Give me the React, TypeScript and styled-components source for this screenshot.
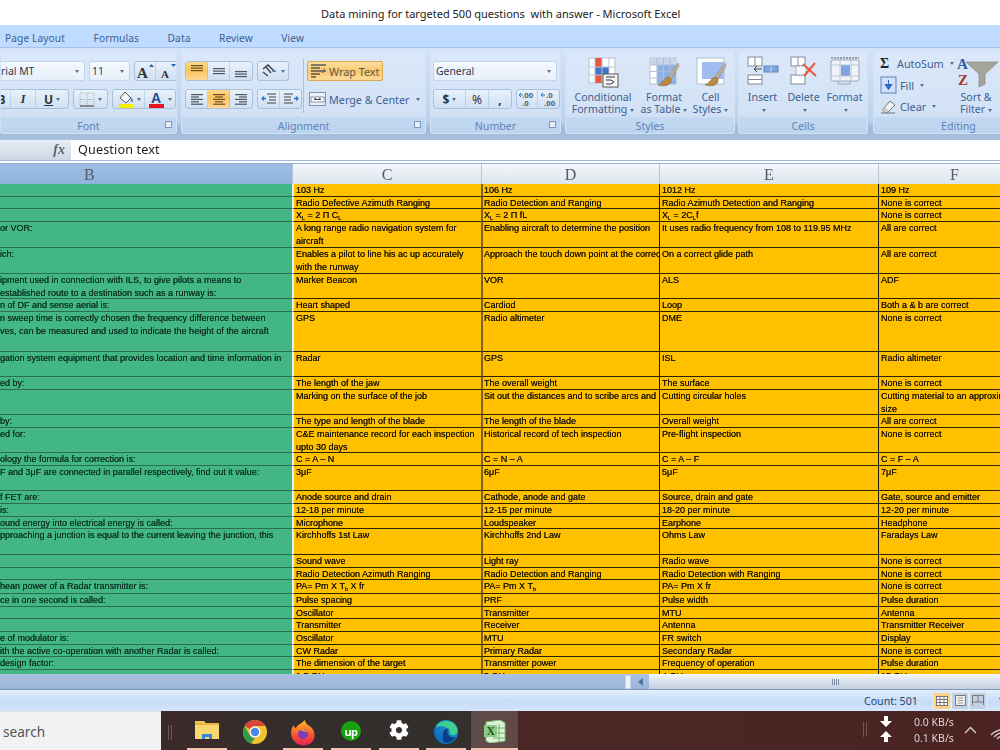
import React from "react";
import styled, { createGlobalStyle } from "styled-components";
import { FaCog } from "react-icons/fa";

const Global = createGlobalStyle`
  html, body { margin: 0; padding: 0; background: #fff; }
  * { box-sizing: border-box; }
`;

const UI = `"Noto Sans", "Open Sans", sans-serif`;
const BLUE = "#3f5f8e";

const Root = styled.div`
  width: 1000px; height: 750px; overflow: hidden; display: flex; flex-direction: column;
  font-family: ${UI}; filter: blur(0.35px);
`;
const TitleBar = styled.div`
  height: 25px; background: #fff; color: #222; font-size: 11px; display: flex; align-items: center;
  padding: 1px 0 0 321px; white-space: pre;
`;
const Tabs = styled.div`
  height: 23px; background: #bfdbff; border-bottom: 1px solid #a3c3ea; display: flex; align-items: center;
  gap: 28.5px; padding: 3px 0 0 5px; font-size: 10.2px; color: ${BLUE}; letter-spacing: .1px;
`;
const Ribbon = styled.div`
  height: 92px; padding-top: 4px; display: flex; flex-shrink: 0;
  background: linear-gradient(#d3e3f8, #bcd3ee 78%, #9db7d6 88%, #a9c2df);
  overflow: hidden;
`;
const Group = styled.section<{ $w: number; $mr?: number }>`
  width: ${(p) => p.$w}px; margin-right: ${(p) => p.$mr ?? 4}px; height: 82px; flex-shrink: 0; display: flex; flex-direction: column;
  border: 1px solid #d2e1f4; border-top-color: #dce8f8; border-radius: 3px; overflow: hidden;
  background: linear-gradient(#dbe8f9, #d3e2f6 70%, #cbdcf2);
`;
const Body = styled.div`flex: 1; display: flex; min-height: 0;`;
const GroupLabel = styled.div<{ $pl?: number }>`
  height: 16px; flex-shrink: 0; background: linear-gradient(#c3d9f2, #bdd4ef); color: #5d82b3; font-size: 10.6px; padding-top: 1px;
  display: flex; align-items: center; position: relative;
  ${(p) => (p.$pl ? `padding-left:${p.$pl}px;` : "justify-content:center;")}
`;
const Launcher = styled.span`
  position: absolute; right: 4px; top: 4px; width: 7px; height: 7px; border: 1px solid #7d96b8; background: #e8f0fa;
`;
const Caret = styled.i`
  display: inline-block; width: 0; height: 0; margin-left: 3px; vertical-align: middle;
  border-left: 2.5px solid transparent; border-right: 2.5px solid transparent; border-top: 3px solid #5b6e88;
`;
const Rows = styled.div<{ $pl?: number; $w?: number }>`
  display: flex; flex-direction: column; gap: 8px; padding: 8px 0 0 ${(p) => p.$pl ?? 0}px;
  ${(p) => (p.$w ? `width:${p.$w}px;flex-shrink:0;` : "")}
`;
const ToolRow = styled.div`display: flex; height: 20px; gap: 4px; align-items: stretch;`;
const Select = styled.div<{ $w: number; $ml?: number }>`
  width: ${(p) => p.$w}px; height: 20px; margin-left: ${(p) => p.$ml ?? 0}px; display: flex; align-items: center; justify-content: space-between;
  padding: 0 5px 0 2px; font-size: 10.4px; color: #2c3a4d; border: 1px solid #c3d5ec; border-radius: 2px;
  background: linear-gradient(#f4f8fe, #e6effa);
`;
const BtnGroup = styled.div<{ $ml?: number }>`
  display: flex; height: 20px; border: 1px solid #a9c0dc; border-radius: 3px; overflow: hidden; flex-shrink: 0;
  margin-left: ${(p) => p.$ml ?? 0}px;
  background: linear-gradient(#e9f1fb, #cfdff2);
`;
const Tool = styled.div<{ $w: number; $on?: boolean }>`
  width: ${(p) => p.$w}px; display: flex; align-items: center; justify-content: center; font-size: 12px; color: #2b3543;
  border-right: 1px solid rgba(160,185,215,.5);
  &:last-child { border-right: 0; }
  ${(p) => (p.$on ? "background: linear-gradient(#fdd98a, #fcc45e 45%, #fdd894);" : "")}
`;
const ItalicI = styled.i`font-family: "Liberation Serif", serif; font-weight: bold;`;
const Sep = styled.div`width: 1px; height: 54px; margin: 6px 3px 0 0; background: #a9c0dc;`;
const WrapBtn = styled.div`
  width: 76px; height: 20px; display: flex; align-items: center; gap: 2px; padding-left: 2px; font-size: 10.8px; color: #5a5a48;
  border: 1px solid #d9a94f; border-radius: 2px; background: linear-gradient(#fde0a2, #fcc86c 50%, #fdd997);
`;
const MergeBtn = styled.div`
  height: 20px; display: flex; align-items: center; gap: 3px; padding-left: 2px; font-size: 10.8px; color: ${BLUE}; white-space: nowrap;
`;
const BigRow = styled.div<{ $pl: number }>`display: flex; padding: 3px 0 0 ${(p) => p.$pl}px;`;
const Big = styled.div<{ $w: number }>`
  width: ${(p) => p.$w}px; flex-shrink: 0; display: flex; flex-direction: column; align-items: center;
  font-size: 10.6px; line-height: 12px; color: ${BLUE}; text-align: center; white-space: nowrap;
`;
const BigIcon = styled.div`height: 35px; display: flex; align-items: flex-start;`;
const EditCol = styled.div`display: flex; flex-direction: column; gap: 2.5px; padding: 1px 0 0 6px; width: 84px; flex-shrink: 0;`;
const EditItem = styled.div`
  height: 19px; display: flex; align-items: center; gap: 3px; font-size: 10.8px; color: ${BLUE}; white-space: nowrap;
`;
const Sigma = styled.b`font-family: "Liberation Serif", serif; font-size: 14px; color: #222; width: 14px;`;
const FormulaBar = styled.div`
  height: 21px; margin-bottom: 2px; display: flex; align-items: stretch; background: #fff; border-bottom: 1px solid #9db8d6; flex-shrink: 0;
`;
const NameArea = styled.div`
  width: 71px; background: linear-gradient(#e9eef5, #ccd6e4); display: flex; align-items: center; justify-content: flex-end; padding-right: 6px;
  font-family: "Liberation Serif", serif; font-style: italic; font-weight: bold; font-size: 14px; color: #5d6470;
`;
const FormulaText = styled.div`padding: 0 0 1px 7px; font-size: 12.6px; color: #222; display: flex; align-items: center; letter-spacing: .15px;`;
const COLS = "292px 189px 178px 219px 300px";
const HeaderRow = styled.div`
  height: 21px; flex-shrink: 0; display: grid; grid-template-columns: ${COLS}; border-top: 1px solid #8fb0d2;
`;
const ColHead = styled.div<{ $sel?: boolean; $pl?: number }>`
  display: flex; align-items: center; justify-content: center; font-family: "Liberation Serif", serif; font-size: 16px; color: #4f5b6b; padding-top: 2px;
  border-left: 1px solid ${(p) => (p.$sel ? "transparent" : "#b8c6d8")};
  background: ${(p) => (p.$sel ? "linear-gradient(#9dbde3,#90b3dc)" : "linear-gradient(#f5f7fa,#dbe3ee)")};
  ${(p) => p.$pl && `justify-content: flex-start; padding-left: ${p.$pl}px;`}
`;
const Sheet = styled.div`height: 490px; flex-shrink: 0; overflow: hidden;`;
const Row = styled.div<{ $h: number }>`
  height: ${(p) => p.$h}px; display: grid; grid-template-columns: ${COLS};
`;
const Cell = styled.div<{ $col: number }>`
  overflow: hidden; white-space: pre; font-family: "Liberation Sans", Arial, sans-serif; font-size: 9px; line-height: 12.7px;
  text-shadow: 0 0 .5px currentColor;
  padding-left: ${(p) => (p.$col === 0 ? 0 : p.$col === 2 ? 1 : 2)}px;
  ${(p) =>
    p.$col === 0
      ? "background:#42b784;color:#0c3325;border-bottom:1px solid #2a6d53;"
      : `background:#ffc000;color:#1e1700;border-bottom:1px solid #2a2200;border-left:${
          p.$col === 1 ? "2px solid #e8eef4" : p.$col === 2 ? "2px solid #7b6318" : "1px solid #1e1900"
        };`}
`;
const Sub = styled.sub`font-size: 5.5px; line-height: 0; vertical-align: -1.5px;`;
const ScrollBar = styled.div`
  height: 16px; flex-shrink: 0; display: flex; align-items: center; background: linear-gradient(#a9c1e2,#9bb5da); border-bottom: 1px solid #7f98bd;
`;
const ScrollFill = styled.div`width: 625px;`;
const Splitter = styled.div`width: 6px; height: 14px; background: #eef3fa; border: 1px solid #c3d3ea;`;
const ScrollArrow = styled.div`
  width: 18px; height: 15px; display: flex; align-items: center; justify-content: center;
  &::before { content: ""; border-top: 4px solid transparent; border-bottom: 4px solid transparent; border-right: 5px solid #54739c; }
`;
const Thumb = styled.div`
  flex: 1; height: 15px; background: linear-gradient(#f5f8fc,#d4deeb 60%,#c3cfdf); display: flex; align-items: center; padding-left: 183px;
`;
const Grip = styled.div`width: 7px; height: 6px; background: repeating-linear-gradient(90deg,#7d8da3 0 1px,transparent 1px 2px);`;
const Status = styled.div`
  height: 21px; flex-shrink: 0; display: flex; align-items: center;
  background: linear-gradient(#e3eefc,#c6dcf8 55%,#d4e5fb); font-size: 10.6px; color: #24456f; padding-left: 864px; white-space: nowrap;
`;
const Count = styled.div`width: 69px; flex-shrink: 0;`;
const Views = styled.div`
  width: 54px; height: 19px; flex-shrink: 0; display: flex; align-items: center; gap: 2px; padding: 0 1px; background: #dfeafa; border-radius: 3px;
`;
const ViewBtn = styled.div<{ $on?: boolean }>`
  width: 17px; height: 16px; display: flex; align-items: center; justify-content: center;
  background: ${(p) => (p.$on ? "#fcd383" : "#c3d1e6")}; border-radius: 1px;
`;
const Zoom = styled.div`margin-left: 11px; color: #24456f;`;
const Taskbar = styled.div`
  height: 39px; flex-shrink: 0; display: flex; background: linear-gradient(90deg,#3d2a2a 161px,#332d2b 300px,#33302e 470px,#4a2725 520px,#4b2422);
  overflow: hidden;
`;
const Search = styled.div`
  width: 161px; flex-shrink: 0; background: #f2f2f2; color: #555; font-size: 13.6px; padding-left: 3px; display: flex; align-items: center; border-top: 1px solid #ddd;
`;
const TaskGrip = styled.div`
  width: 4px; height: 15px; margin: 14px 11px 0 7px; flex-shrink: 0; border-left: 1px solid #6c5a58; border-right: 1px solid #6c5a58;
`;
const Tile = styled.div<{ $on?: boolean; $w?: number; $ml?: number }>`
  width: ${(p) => p.$w ?? 48}px; margin-left: ${(p) => p.$ml ?? 0}px; flex-shrink: 0; display: flex; flex-direction: column; align-items: center;
  background: ${(p) => (p.$on ? "#5f4a48" : "transparent")};
`;
const TileIcon = styled.div`height: 37px; padding-top: 9px;`;
const Indicator = styled.div<{ $w: number }>`width: ${(p) => p.$w}px; height: 2px; background: #f6bfb0;`;
const Tray = styled.div`display: flex; margin-left: 345px; flex-shrink: 0; align-items: flex-start;`;
const TrayGrip = styled.div`width: 4px; height: 15px; margin: 11px 13px 0 0; border-left: 1px solid #6c5653; border-right: 1px solid #6c5653;`;
const Arrows = styled.div`display: flex; flex-direction: column; gap: 4px; padding-top: 5px; width: 34px;`;
const Speeds = styled.div`
  color: #dcd6d4; font-size: 10.5px; line-height: 15.5px; padding-top: 4px; width: 50px; white-space: nowrap;
`;
const TrayIcon = styled.div<{ $pt: number; $w: number }>`display: flex; padding-top: ${(p) => p.$pt}px; width: ${(p) => p.$w}px;`;
const UpBadge = styled.div`
  width: 20px; height: 20px; border-radius: 50%; background: #17a20d; color: #fff; font-size: 11px; font-weight: 700; letter-spacing: -.5px;
  display: flex; align-items: center; justify-content: center; margin-top: 1px;
`;

const Lines = ({ rows, c = "#4d5563" }: { rows: [number, number, number][]; c?: string }) => (
  <svg width="14" height="14" viewBox="0 0 14 14">
    {rows.map(([y, x, w], i) => <rect key={i} x={x} y={y} width={w} height="1.2" fill={c} />)}
  </svg>
);
const v = (y: number): [number, number, number][] => [[y, 1, 12], [y + 2.5, 1, 12], [y + 5, 1, 12]];
const h4 = (f: (w: number) => number): [number, number, number][] =>
  [12, 8, 12, 8, 12].map((w, i) => [2 + i * 2.4, f(w), w]);

const Cond = () => (
  <svg width="32" height="32" viewBox="0 0 32 32">
    <rect x="2" y="2" width="26" height="25" fill="#fff" stroke="#b7c3d2" />
    <rect x="8" y="2" width="7" height="9" fill="#e8563f" /><rect x="8" y="19" width="7" height="8" fill="#e8563f" />
    <rect x="8" y="11" width="14" height="8" fill="#3f76cc" />
    <path d="M2 11h26M2 19h26M8 2v25M15 2v25M22 2v25" stroke="#b7c3d2" fill="none" />
    <rect x="16" y="18" width="15" height="13" fill="#f7f7f7" stroke="#555" />
    <path d="M19 21h9M19 24h5l3 2-3 2h-5" stroke="#333" fill="none" />
  </svg>
);
const Brush = () => (
  <g><path d="M30 7 L20 21 L23 23 L31 10Z" fill="#b9b09a" stroke="#8a7f66" strokeWidth=".5" />
    <path d="M20 21 C15 23 15 27 10 29 C18 31 24 29 23 23Z" fill="#b98a45" stroke="#7f5b25" strokeWidth=".5" /></g>
);
const TableI = () => (
  <svg width="32" height="32" viewBox="0 0 32 32">
    <rect x="2" y="2" width="26" height="26" fill="#fff" stroke="#b7c3d2" />
    <rect x="9" y="9" width="19" height="19" fill="#8eaee6" /><rect x="2" y="2" width="26" height="7" fill="#c7d6ec" />
    <path d="M2 9h26M2 15.5h26M2 22h26M9 2v26M15.5 2v26M22 2v26" stroke="#aebfd6" fill="none" /><Brush />
  </svg>
);
const StyleI = () => (
  <svg width="32" height="32" viewBox="0 0 32 32">
    <rect x="2" y="2" width="27" height="26" fill="#fff" stroke="#aebfd6" />
    <rect x="7" y="6" width="22" height="17" fill="#9ebcf0" /><Brush />
  </svg>
);
const InsertI = () => (
  <svg width="32" height="30" viewBox="0 0 32 30">
    <rect x="1" y="1" width="14" height="9" fill="#fff" stroke="#7f8a99" /><path d="M8 1v9M8 19v9" stroke="#7f8a99" />
    <rect x="1" y="19" width="14" height="9" fill="#fff" stroke="#7f8a99" /><path d="M1 23.5h14" stroke="#7f8a99" />
    <rect x="17" y="10" width="14" height="6" fill="#7ea6e0" stroke="#5d84bd" /><path d="M24 10v6" stroke="#c7d8f0" />
    <path d="M15 13H7M10 10l-3 3 3 3" fill="none" stroke="#444" />
  </svg>
);
const DeleteI = () => (
  <svg width="30" height="30" viewBox="0 0 30 30">
    <rect x="2" y="1" width="14" height="9" fill="#fff" stroke="#7f8a99" /><path d="M9 1v9M9 19v9M2 23.5h14" stroke="#7f8a99" />
    <rect x="2" y="19" width="14" height="9" fill="#fff" stroke="#7f8a99" />
    <rect x="7" y="10" width="10" height="9" fill="#f3f6fb" stroke="#888" strokeDasharray="1.5 1" />
    <path d="M14 8l13 12M26 7L15 20" stroke="#e8573f" strokeWidth="2" />
  </svg>
);
const FormatI = () => (
  <svg width="30" height="30" viewBox="0 0 30 30">
    <path d="M1 2h28" stroke="#555" strokeDasharray="2 1" />
    <rect x="1" y="4" width="28" height="21" rx="2" fill="#f0f4fa" stroke="#9aa7b8" />
    <rect x="11" y="9" width="9" height="11" fill="#7fa3e6" />
    <path d="M10 4v21M21 4v21M1 9h28M1 20h28" stroke="#b8c4d4" />
    <path d="M8 25v3h12v-3" fill="none" stroke="#9aa7b8" />
  </svg>
);
const SortI = () => (
  <svg width="44" height="33" viewBox="0 0 44 33">
    <path d="M12 6h32L31 18v10l-6 3V18Z" fill="#a5a59b" stroke="#7c7c74" strokeWidth=".6" />
    <text x="3" y="13" fontFamily="Liberation Serif" fontWeight="bold" fontSize="15" fill="#2f5da8">A</text>
    <text x="4" y="29" fontFamily="Liberation Serif" fontWeight="bold" fontSize="15" fill="#a3392f">Z</text>
  </svg>
);
const PaintI = () => (
  <svg width="17" height="17" viewBox="0 0 17 17">
    <path d="M8 1l6 6-5 5-6-5Z" fill="#f4f6f9" stroke="#555" /><path d="M14 7l1.5 4" stroke="#6a8abd" strokeWidth="2" />
    <rect x="2" y="13" width="14" height="4" fill="#f5f000" />
  </svg>
);
const FontA = () => (
  <svg width="17" height="17" viewBox="0 0 17 17">
    <text x="3" y="12" fontFamily="Liberation Sans" fontWeight="bold" fontSize="14" fill="#29498f">A</text>
    <rect x="1" y="13" width="15" height="4" fill="#e8121c" />
  </svg>
);
const GrowA = ({ s, up }: { s: number; up: boolean }) => (
  <svg width="20" height="17" viewBox="0 0 20 17">
    <text x={up ? 2 : 4} y="15" fontFamily="Liberation Serif" fontWeight="bold" fontSize={s} fill="#333">A</text>
    <path d={up ? "M14 4l2.5-3 2.5 3Z" : "M14 1h5l-2.5 3Z"} fill="#2a60b0" />
  </svg>
);
const Orient = () => (
  <svg width="17" height="14" viewBox="0 0 17 14">
    <path d="M2 5l5-4 7 7M2 8l5 4" fill="none" stroke="#45494f" strokeWidth="1.6" /><path d="M5 3l5 6" stroke="#45494f" strokeWidth="1.4" />
    <path d="M11 7l4 0" stroke="#5d82b3" strokeWidth="1.4" />
  </svg>
);
const Indent = ({ flip }: { flip?: boolean }) => (
  <svg width="16" height="14" viewBox="0 0 16 14">
    <g transform={flip ? "translate(16 0) scale(-1 1)" : undefined}>
      <path d="M6 2h9M8 5h7M8 8h7M6 11h9" stroke="#444" strokeWidth="1.2" /><path d="M5 6.5H1M3 4.5L1 6.5l2 2" stroke="#2f78d0" fill="none" strokeWidth="1.3" />
    </g>
  </svg>
);
const WrapI = () => (
  <svg width="17" height="16" viewBox="0 0 17 16">
    <path d="M1 2h15M1 5h9M1 8h15M1 11h9M1 14h5" stroke="#5a5a50" strokeWidth="1.3" /><path d="M14 5v4h-3" stroke="#4d6d9c" fill="none" />
  </svg>
);
const MergeI = () => (
  <svg width="17" height="14" viewBox="0 0 17 14">
    <rect x=".5" y=".5" width="16" height="13" fill="#eef2f8" stroke="#8293a9" />
    <rect x="2" y="5" width="13" height="5" fill="#fff" stroke="#8293a9" />
    <path d="M5 7.5h7M5 7.5l2-1.5M12 7.5l-2-1.5" stroke="#444" />
  </svg>
);
const BordersI = () => (
  <svg width="16" height="15" viewBox="0 0 16 15">
    <rect x="1" y="1" width="14" height="13" fill="none" stroke="#a7aeb8" strokeDasharray="1 1" />
    <path d="M8 1v13M1 7.5h14" stroke="#a7aeb8" strokeDasharray="1 1" /><path d="M1 14h14" stroke="#444" />
  </svg>
);
const DecI = ({ more }: { more?: boolean }) => (
  <svg width="18" height="16" viewBox="0 0 18 16">
    <text x={more ? 6 : 4} y="7" fontFamily="Liberation Sans" fontWeight="bold" fontSize="8" fill="#4c5563">{more ? ".0" : ".00"}</text>
    <text x="4" y="15" fontFamily="Liberation Sans" fontWeight="bold" fontSize="8" fill="#4c5563">{more ? ".00" : ".0"}</text>
    <path d="M1 4h4M1 4l2-2M1 4l2 2" stroke="#2f78d0" fill="none" />
  </svg>
);
const FillI = () => (
  <svg width="17" height="18" viewBox="0 0 17 18">
    <rect x="1" y="1" width="15" height="16" fill="#cfe0f7" stroke="#5c82bb" />
    <path d="M8.5 4v7M5 8.5h7l-3.5 5Z" fill="#2f68c4" stroke="#2f68c4" />
  </svg>
);
const ClearI = () => (
  <svg width="17" height="15" viewBox="0 0 17 15">
    <path d="M2 11l8-9 5 4-7 7H4Z" fill="#f1f1f1" stroke="#777" /><path d="M1 14h14" stroke="#777" />
    <path d="M2 11l3-3 4 4-2 1H4Z" fill="#ccc" />
  </svg>
);
const Folder = () => (
  <svg width="24" height="20" viewBox="0 0 24 20">
    <path d="M0 1h9l2 2h13v16H0Z" fill="#f4c64f" /><rect y="4" width="24" height="15" fill="#fbd86e" />
    <rect x="0" y="3" width="24" height="2" fill="#e8b43f" />
    <path d="M7 19v-5h10v5h-3v-2h-4v2Z" fill="#2f8bd8" />
  </svg>
);
const Chrome = () => (
  <svg width="24" height="24" viewBox="0 0 24 24">
    <circle cx="12" cy="12" r="12" fill="#f2c12e" />
    <path d="M12 0a12 12 0 0 1 10.4 6H12a6 6 0 0 0-5.2 3L1.6 6A12 12 0 0 1 12 0Z" fill="#d9433a" />
    <path d="M1.6 6l5.2 9a6 6 0 0 0 5.2 3L8 23.3A12 12 0 0 1 1.600 6Z" fill="#2e9d4a" />
    <circle cx="12" cy="12" r="5.5" fill="#fff" /><circle cx="12" cy="12" r="4.2" fill="#4a86e8" />
  </svg>
);
const Firefox = () => (
  <svg width="24" height="26" viewBox="0 0 24 26">
    <defs><linearGradient id="ff" x1="0" y1="0" x2="0" y2="1"><stop offset="0" stopColor="#fdbb2e" /><stop offset=".6" stopColor="#f5532d" /><stop offset="1" stopColor="#e8215c" /></linearGradient></defs>
    <path d="M14 0c0 4 4 5 7 8 4 5 3 12-1 15-5 4-13 3-17-2C-1 16-1 9 3 5c0 2 1 3 2 3 1-3 5-4 9-8Z" fill="url(#ff)" />
    <circle cx="12" cy="14" r="5" fill="#7a3bb8" /><path d="M8 10c3-2 7-1 8 3-2-2-5-2-8-3Z" fill="#f79a32" />
  </svg>
);
const Edge = () => (
  <svg width="24" height="24" viewBox="0 0 24 24">
    <defs><linearGradient id="eg" x1="0" y1="1" x2="1" y2="0"><stop offset="0" stopColor="#0b5fb8" /><stop offset="1" stopColor="#1da7d8" /></linearGradient></defs>
    <circle cx="12" cy="12" r="12" fill="url(#eg)" />
    <path d="M2 7C5 0 18-2 23 8c1 3 0 6-3 7-3 0-5-1-4-3 0-4-7-7-14-5Z" fill="#3fcf8e" />
    <path d="M9 13c0-3 3-5 6-4-2 1-2 3-1 5 1 3 5 4 8 3-3 5-9 7-12 5-2-2-1-6-1-9Z" fill="#0a3f86" />
  </svg>
);
const ExcelI = () => (
  <svg width="23" height="23" viewBox="0 0 23 23">
    <path d="M3 2l14-2 5 3v18l-15 2-4-2Z" fill="#dff0d8" stroke="#7fbf7a" />
    <path d="M10 8h12M10 13h12M10 18h12M16 4v17" stroke="#6fb36a" />
    <rect x="1" y="5" width="13" height="12" fill="#8ecb86" />
    <text x="3.500" y="15" fontFamily="Liberation Serif" fontWeight="bold" fontSize="12" fill="#1a5c1a">X</text>
  </svg>
);
const Wifi = () => (
  <svg width="30" height="20" viewBox="0 0 30 20">
    <path d="M1 14a20 20 0 0 1 28 0M4 16a15 15 0 0 1 22 0M7 18a11 11 0 0 1 16 0" fill="none" stroke="#c9c4c2" strokeWidth="1.5" />
  </svg>
);
const NetArrow = ({ up }: { up?: boolean }) => (
  <svg width="12" height="11" viewBox="0 0 12 11">
    <path d={up ? "M6 0l6 6H8v5H4V6H0Z" : "M6 11l6-6H8V0H4v5H0Z"} fill="#fff" />
  </svg>
);
const Chevron = () => (
  <svg width="13" height="8" viewBox="0 0 13 8"><path d="M1 7l5.500-5.500L12 7" fill="none" stroke="#d6d0ce" strokeWidth="1.4" /></svg>
);
const Grid3 = () => (
  <svg width="12" height="10" viewBox="0 0 12 10">
    <rect x=".5" y=".5" width="11" height="9" fill="#fff" stroke="#777" /><path d="M4 .5v9M8 .5v9M.5 3.500h11M.5 6.500h11" stroke="#777" />
  </svg>
);
const PageV = () => (
  <svg width="11" height="11" viewBox="0 0 11 11"><rect x=".5" y=".5" width="10" height="10" fill="#eee" stroke="#777" /><path d="M3 3h5M3 5.500h5M3 8h5" stroke="#999" /></svg>
);
const BreakV = () => (
  <svg width="12" height="11" viewBox="0 0 12 11"><path d="M.5 10V.5h11V10M6 .5V7M.5 7h11" fill="none" stroke="#777" /></svg>
);

const XL = (t: React.ReactNode) => <>X<Sub>L</Sub>{t}</>;
type R = { h: number; c: React.ReactNode[] };
const none = "None is correct";
const data: R[] = [
  { h: 13, c: ["", "103 Hz", "106 Hz", "1012 Hz", "109 Hz"] },
  { h: 12, c: ["", "Radio Defective Azimuth Ranging", "Radio Detection and Ranging", "Radio Azimuth Detection and Ranging", none] },
  { h: 13, c: ["", XL(<> = 2 Π C<Sub>L</Sub></>), XL(" = 2 Π fL"), XL(<> = 2C<Sub>L</Sub>f</>), none] },
  { h: 26, c: ["or VOR:", "A long range radio navigation system for\naircraft", "Enabling aircraft to determine the position", "It uses radio frequency from 108 to 119.95 MHz", "All are correct"] },
  { h: 26, c: ["ich:", "Enables a pilot to line his ac up accurately\nwith the runway", "Approach the touch down point at the correct", "On a correct glide path", "All are correct"] },
  { h: 25, c: ["ipment used in connection with ILS, to give pilots a means to\nestablished route to a destination such as a runway is:", "Marker Beacon", "VOR", "ALS", "ADF"] },
  { h: 13, c: ["n of DF and sense aerial is:", "Heart shaped", "Cardiod", "Loop", "Both a & b are correct"] },
  { h: 40, c: ["n sweep time is correctly chosen the frequency difference between\nves, can be measured and used to indicate the height of the aircraft", "GPS", "Radio altimeter", "DME", none] },
  { h: 25, c: ["gation system equipment that provides location and time information in", "Radar", "GPS", "ISL", "Radio altimeter"] },
  { h: 13, c: ["ed by:", "The length of the jaw", "The overall weight", "The surface", none] },
  { h: 25, c: ["", "Marking on the surface of the job", "Sit out the distances and to scribe arcs and", "Cutting circular holes", "Cutting material to an approximate\nsize"] },
  { h: 13, c: ["by:", "The type and length of the blade", "The length of the blade", "Overall weight", "All are correct"] },
  { h: 25, c: ["ed for:", "C&E maintenance record for each inspection\nupto 30 days", "Historical record of tech inspection", "Pre-flight inspection", none] },
  { h: 13, c: ["ology the formula for correction is:", "C = A – N", "C = N – A", "C = A – F", "C = F – A"] },
  { h: 25, c: ["F and 3μF are connected in parallel respectively, find out it value:", "3μF", "6μF", "5μF", "7μF"] },
  { h: 13, c: ["f FET are:", "Anode source and drain", "Cathode, anode and gate", "Source, drain and gate", "Gate, source and emitter"] },
  { h: 13, c: ["is:", "12-18 per minute", "12-15 per minute", "18-20 per minute", "12-20 per minute"] },
  { h: 12, c: ["ound energy into electrical energy is called:", "Microphone", "Loudspeaker", "Earphone", "Headphone"] },
  { h: 26, c: ["pproaching a junction is equal to the current leaving the junction, this", "Kirchhoffs 1st Law", "Kirchhoffs 2nd Law", "Ohms Law", "Faradays Law"] },
  { h: 13, c: ["", "Sound wave", "Light ray", "Radio wave", none] },
  { h: 12, c: ["", "Radio Detection Azimuth Ranging", "Radio Detection and Ranging", "Radio Detection with Ranging", none] },
  { h: 14, c: ["hean power of a Radar transmitter is:", <>PA= Pm X T<Sub>b</Sub> X fr</>, <>PA= Pm X T<Sub>b</Sub></>, "PA= Pm X fr", none] },
  { h: 13, c: ["ce in one second is called:", "Pulse spacing", "PRF", "Pulse width", "Pulse duration"] },
  { h: 12, c: ["", "Oscillator", "Transmitter", "MTU", "Antenna"] },
  { h: 13, c: ["", "Transmitter", "Receiver", "Antenna", "Transmitter Receiver"] },
  { h: 13, c: ["e of modulator is:", "Oscillator", "MTU", "FR switch", "Display"] },
  { h: 12, c: ["ith the active co-operation with another Radar is called:", "CW Radar", "Primary Radar", "Secondary Radar", none] },
  { h: 13, c: ["design factor:", "The dimension of the target", "Transmitter power", "Frequency of operation", "Pulse duration"] },
  { h: 13, c: ["", "1.5 GHz", "3 GHz", "4 GHz", "15 GHz"] },
];

export default function App() {
  return (
    <Root>
      <Global />
      <TitleBar>Data mining for targeted 500 questions  with answer - Microsoft Excel</TitleBar>
      <Tabs><span>Page Layout</span><span>Formulas</span><span>Data</span><span>Review</span><span>View</span></Tabs>
      <Ribbon>
        <Group $w={177}>
          <Body>
            <Rows>
              <ToolRow>
                <Select $w={87} $ml={-3}>rial MT<Caret /></Select>
                <Select $w={41}>11<Caret /></Select>
                <BtnGroup>
                  <Tool $w={21}><GrowA s={15} up /></Tool>
                  <Tool $w={21}><GrowA s={11} up={false} /></Tool>
                </BtnGroup>
              </ToolRow>
              <ToolRow>
                <BtnGroup $ml={-9}>
                  <Tool $w={18}><b>B</b></Tool>
                  <Tool $w={25}><ItalicI>I</ItalicI></Tool>
                  <Tool $w={32}><u><b>U</b></u><Caret /></Tool>
                </BtnGroup>
                <BtnGroup><Tool $w={33}><BordersI /><Caret /></Tool></BtnGroup>
                <BtnGroup>
                  <Tool $w={32}><PaintI /><Caret /></Tool>
                  <Tool $w={30}><FontA /><Caret /></Tool>
                </BtnGroup>
              </ToolRow>
            </Rows>
          </Body>
          <GroupLabel>Font<Launcher /></GroupLabel>
        </Group>
        <Group $w={245}>
          <Body>
            <Rows $pl={3} $w={121}>
              <ToolRow>
                <BtnGroup>
                  <Tool $w={22} $on><Lines rows={v(1)} c="#6b5020" /></Tool>
                  <Tool $w={22}><Lines rows={v(4)} /></Tool>
                  <Tool $w={22}><Lines rows={v(7)} /></Tool>
                </BtnGroup>
                <BtnGroup><Tool $w={30}><Orient /><Caret /></Tool></BtnGroup>
              </ToolRow>
              <ToolRow>
                <BtnGroup>
                  <Tool $w={22}><Lines rows={h4(() => 1)} /></Tool>
                  <Tool $w={22} $on><Lines rows={h4((w) => (14 - w) / 2)} c="#6b5020" /></Tool>
                  <Tool $w={22}><Lines rows={h4((w) => 13 - w)} /></Tool>
                </BtnGroup>
                <BtnGroup>
                  <Tool $w={22}><Indent /></Tool>
                  <Tool $w={21}><Indent flip /></Tool>
                </BtnGroup>
              </ToolRow>
            </Rows>
            <Sep />
            <Rows>
              <WrapBtn><WrapI />Wrap Text</WrapBtn>
              <MergeBtn><MergeI />Merge &amp; Center<Caret /></MergeBtn>
            </Rows>
          </Body>
          <GroupLabel>Alignment<Launcher /></GroupLabel>
        </Group>
        <Group $w={131}>
          <Body>
            <Rows $pl={2}>
              <Select $w={124}>General<Caret /></Select>
              <ToolRow>
                <BtnGroup>
                  <Tool $w={32}><b>$</b><Caret /></Tool>
                  <Tool $w={23}>%</Tool>
                  <Tool $w={22}><b>,</b></Tool>
                </BtnGroup>
                <BtnGroup><Tool $w={21}><DecI /></Tool><Tool $w={21}><DecI more /></Tool></BtnGroup>
              </ToolRow>
            </Rows>
          </Body>
          <GroupLabel>Number<Launcher /></GroupLabel>
        </Group>
        <Group $w={170} $mr={3}>
          <Body>
            <BigRow $pl={0}>
              <Big $w={74}><BigIcon><Cond /></BigIcon>Conditional<span>Formatting<Caret /></span></Big>
              <Big $w={48}><BigIcon><TableI /></BigIcon>Format<span>as Table<Caret /></span></Big>
              <Big $w={45}><BigIcon><StyleI /></BigIcon>Cell<span>Styles<Caret /></span></Big>
            </BigRow>
          </Body>
          <GroupLabel>Styles</GroupLabel>
        </Group>
        <Group $w={130} $mr={5}>
          <Body>
            <BigRow $pl={3}>
              <Big $w={41}><BigIcon><InsertI /></BigIcon>Insert<span><Caret /></span></Big>
              <Big $w={41}><BigIcon><DeleteI /></BigIcon>Delete<span><Caret /></span></Big>
              <Big $w={41}><BigIcon><FormatI /></BigIcon>Format<span><Caret /></span></Big>
            </BigRow>
          </Body>
          <GroupLabel>Cells</GroupLabel>
        </Group>
        <Group $w={170}>
          <Body>
            <EditCol>
              <EditItem><Sigma>Σ</Sigma>AutoSum<Caret /></EditItem>
              <EditItem><FillI />Fill<Caret /></EditItem>
              <EditItem><ClearI />Clear<Caret /></EditItem>
            </EditCol>
            <BigRow $pl={0}>
              <Big $w={36}><BigIcon><SortI /></BigIcon>Sort &amp;<span>Filter<Caret /></span></Big>
            </BigRow>
          </Body>
          <GroupLabel $pl={67}>Editing</GroupLabel>
        </Group>
      </Ribbon>
      <FormulaBar>
        <NameArea>fx</NameArea>
        <FormulaText>Question text</FormulaText>
      </FormulaBar>
      <HeaderRow>
        <ColHead $sel $pl={83}>B</ColHead><ColHead>C</ColHead><ColHead>D</ColHead><ColHead>E</ColHead>
        <ColHead $pl={71}>F</ColHead>
      </HeaderRow>
      <Sheet>
        {data.map((r, i) => (
          <Row key={i} $h={r.h}>
            {r.c.map((c, j) => <Cell key={j} $col={j}>{c}</Cell>)}
          </Row>
        ))}
      </Sheet>
      <ScrollBar>
        <ScrollFill /><Splitter /><ScrollArrow />
        <Thumb><Grip /></Thumb>
      </ScrollBar>
      <Status>
        <Count>Count: 501</Count>
        <Views>
          <ViewBtn $on><Grid3 /></ViewBtn><ViewBtn><PageV /></ViewBtn><ViewBtn><BreakV /></ViewBtn>
        </Views>
        <Zoom>1</Zoom>
      </Status>
      <Taskbar>
        <Search>search</Search>
        <TaskGrip />
        <Tile><TileIcon><Folder /></TileIcon><Indicator $w={40} /></Tile>
        <Tile><TileIcon><Chrome /></TileIcon></Tile>
        <Tile><TileIcon><Firefox /></TileIcon><Indicator $w={40} /></Tile>
        <Tile><TileIcon><UpBadge>up</UpBadge></TileIcon><Indicator $w={40} /></Tile>
        <Tile $w={47}><TileIcon><FaCog color="#fff" size={20} /></TileIcon><Indicator $w={40} /></Tile>
        <Tile><TileIcon><Edge /></TileIcon><Indicator $w={40} /></Tile>
        <Tile $on $w={47} $ml={1}><TileIcon><ExcelI /></TileIcon><Indicator $w={47} /></Tile>
        <Tray>
          <TrayGrip />
          <Arrows><NetArrow /><NetArrow up /></Arrows>
          <Speeds>0.0 KB/s<br />0.1 KB/s</Speeds>
          <TrayIcon $pt={15} $w={26}><Chevron /></TrayIcon>
          <TrayIcon $pt={10} $w={30}><Wifi /></TrayIcon>
        </Tray>
      </Taskbar>
    </Root>
  );
}
